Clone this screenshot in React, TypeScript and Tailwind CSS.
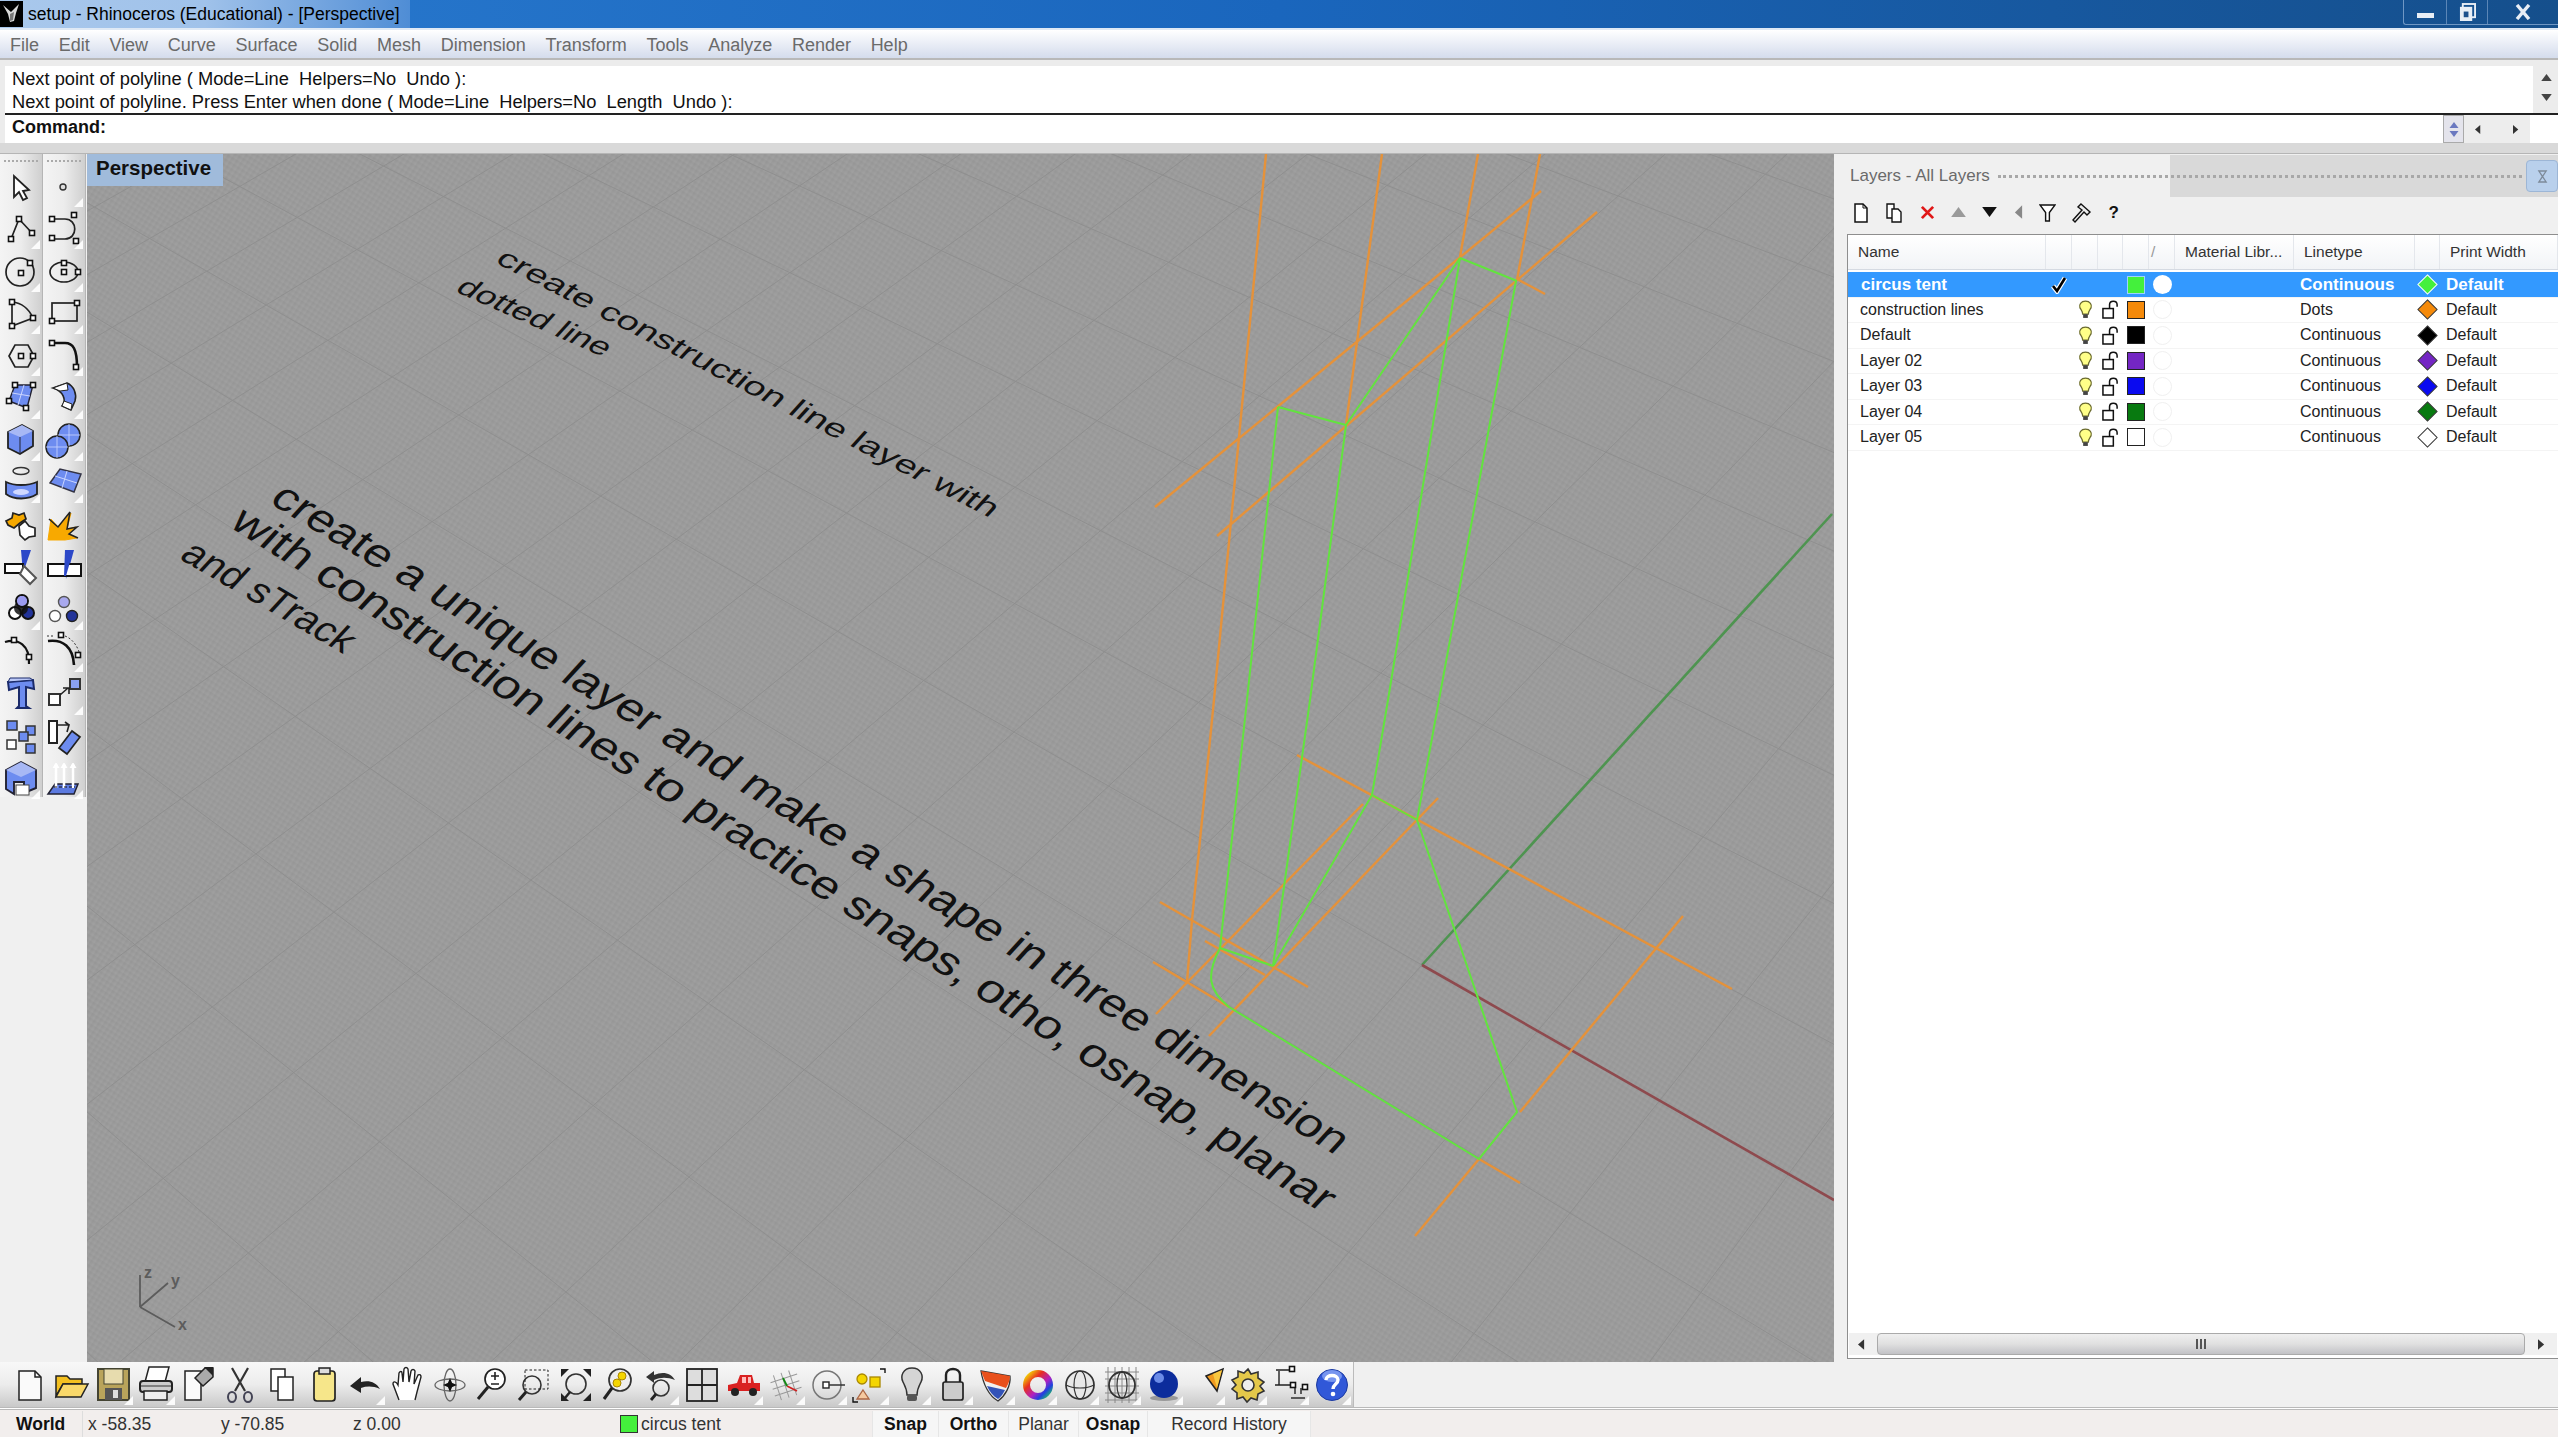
import React from "react";

const SANS = "font-['Liberation_Sans',sans-serif]";

// small svg helpers for the toolbar icons
const Ic = ({ children, fly = true }: { children: React.ReactNode; fly?: boolean }) => (
  <svg viewBox="0 0 42 42" className="w-[42px] h-[42px] block">
    {children}
    {fly && <polygon points="31,41 40,32 40,41" fill="#fff" opacity="0.9" />}
  </svg>
);
const H = ({ x, y, f = "#fff" }: { x: number; y: number; f?: string }) => (
  <rect x={x - 2.5} y={y - 2.5} width={5} height={5} fill={f} stroke="#111" strokeWidth={1.6} />
);
const L = { fill: "none", stroke: "#222", strokeWidth: 1.7 };
const BL = "#6d8cf0";

const leftIcons: React.ReactNode[] = [
  <Ic fly={false}><polygon points="14,10 14,31 19,26 23,34 27,32 23,25 29,24" fill="#fff" stroke="#222" strokeWidth="1.8" /></Ic>,
  <Ic><circle cx="20" cy="21" r="3" fill="#ddd" stroke="#333" strokeWidth="1.4" /></Ic>,
  <Ic><polyline points="11,31 19,11 32,25" {...L} /><H x={11} y={31} /><H x={19} y={11} /><H x={32} y={25} /></Ic>,
  <Ic><path d="M9 11 H22 C35 11 35 31 22 31 H9" {...L} /><H x={9} y={11} /><H x={31} y={7} /><H x={9} y={30} /><H x={33} y={33} /></Ic>,
  <Ic><circle cx="20" cy="21" r="14" {...L} /><H x={21} y={22} /><H x={30} y={12} /></Ic>,
  <Ic><ellipse cx="21" cy="21" rx="14" ry="10" {...L} /><H x={21} y={12} /><H x={21} y={21} /><H x={35} y={21} /></Ic>,
  <Ic fly><path d="M12 9 C22 10 29 16 33 25 L12 33 Z" {...L} /><H x={12} y={9} /><H x={33} y={25} /><H x={12} y={33} /></Ic>,
  <Ic><rect x="9" y="10" width="25" height="18" {...L} /><H x={9} y={28} /><H x={34} y={10} /></Ic>,
  <Ic><polygon points="15,10 28,10 34,21 28,32 15,32 9,21" {...L} /><H x={21} y={21} /><H x={33} y={21} /></Ic>,
  <Ic><path d="M9 8 H22 C30 8 34 14 34 32" fill="none" stroke="#111" strokeWidth="2.6" /><H x={9} y={8} /><H x={33} y={32} /></Ic>,
  <Ic><polygon points="15,7 33,7 27,30 9,23" fill={BL} stroke="#223" strokeWidth="1.4" /><line x1="12" y1="15" x2="30" y2="18" stroke="#cbd6ff" /><line x1="24" y1="7" x2="18" y2="27" stroke="#cbd6ff" /><H x={15} y={7} /><H x={33} y={7} /><H x={9} y={23} /><H x={26} y={30} /></Ic>,
  <Ic><path d="M10 10 L24 5 C31 8 34 16 32 23 L28 32 L19 28 C24 22 20 13 10 10Z" fill={BL} stroke="#222" strokeWidth="1.6" /><path d="M10 10 L24 5 L25 12 L17 13Z" fill="#fff" stroke="#222" /><path d="M19 28 L21 23 L29 26 L28 32Z" fill="#fff" stroke="#222" /></Ic>,
  <Ic><polygon points="8,12 22,5 33,11 33,26 20,34 8,28" fill={BL} stroke="#222" strokeWidth="1.8" /><polygon points="8,12 22,5 33,11 20,17" fill="#a7b8f5" /><line x1="20" y1="17" x2="20" y2="34" stroke="#223" /></Ic>,
  <Ic><circle cx="26" cy="15" r="11" fill={BL} stroke="#222" strokeWidth="1.5" /><circle cx="14" cy="27" r="11" fill={BL} stroke="#222" strokeWidth="1.5" /><path d="M26 4 V26 M15 15 H37 M14 16 V38 M3 27 H25" stroke="#cbd6ff" strokeWidth="0.8" /></Ic>,
];

const leftIcons2: React.ReactNode[] = [
  <Ic><ellipse cx="21" cy="9" rx="8" ry="3.5" fill="none" stroke="#333" strokeWidth="1.5" /><path d="M6 20 C14 24 28 24 37 20 V32 C28 38 14 38 6 32Z" fill={BL} stroke="#222" strokeWidth="1.8" /><ellipse cx="21" cy="30" rx="8" ry="3" fill="#cfd8ff" /></Ic>,
  <Ic><polygon points="7,21 17,7 38,12 31,30" fill={BL} stroke="#334" strokeWidth="1.5" /><line x1="12" y1="14" x2="34" y2="21" stroke="#cbd6ff" /><line x1="24" y1="9" x2="19" y2="26" stroke="#cbd6ff" /></Ic>,
  <Ic fly={false}><path d="M6 16 L12 13 L13 8 L19 10 L24 8 L26 14 L20 18 L14 23 L8 20Z" fill="#f5a800" stroke="#222" strokeWidth="1.7" /><path d="M19 21 L25 16 L29 21 L35 23 L35 31 L29 32 L25 35 L20 30Z" fill="#fff" stroke="#222" strokeWidth="1.7" /></Ic>,
  <Ic fly={false}><polygon points="5,35 8,14 15,22 28,8 24,24 33,22 26,29 34,33 22,35" fill="#f8a900" stroke="#f8a900" /><polyline points="6,14 15,22 27,7 24,24 34,22 26,29 35,33" fill="none" stroke="#222" strokeWidth="1.5" /></Ic>,
  <Ic fly={false}><polygon points="21,3 31,3 23,26" fill="#2c48c8" /><rect x="5" y="17" width="18" height="9" fill="#fff" stroke="#111" strokeWidth="2" /><polygon points="24,19 36,31 30,37 20,27" fill="#fff" stroke="#555" strokeWidth="2" /></Ic>,
  <Ic fly={false}><polygon points="22,3 31,3 23,32" fill="#2c48c8" /><rect x="5" y="17" width="33" height="12" fill="#fff" stroke="#111" strokeWidth="2" /><polygon points="22,3 29,8 23,29 21,29" fill="#2c48c8" /></Ic>,
  <Ic><circle cx="22" cy="12" r="6" fill="#9b9bf0" stroke="#111" strokeWidth="2" /><circle cx="15" cy="24" r="6" fill="#fff" stroke="#111" strokeWidth="2" /><circle cx="28" cy="24" r="6" fill="#223399" stroke="#111" strokeWidth="2" /><circle cx="21" cy="19" r="7" fill="#111" opacity="0.85" /><circle cx="22" cy="12" r="5" fill="#9b9bf0" /></Ic>,
  <Ic><circle cx="21" cy="13" r="5.5" fill="#a9a9ee" stroke="#555" strokeWidth="1.4" /><circle cx="12" cy="27" r="5.5" fill="#fff" stroke="#555" strokeWidth="1.4" /><circle cx="29" cy="27" r="5.5" fill="#223399" stroke="#222" strokeWidth="1.4" /></Ic>,
  <Ic fly={false}><path d="M5 11 C18 7 30 14 29 33" fill="none" stroke="#111" strokeWidth="2.2" /><H x={14} y={9} /><H x={29} y={26} /></Ic>,
  <Ic><path d="M5 10 C20 8 30 16 31 34" fill="none" stroke="#111" strokeWidth="2.6" /><path d="M4 5 H12 M22 5 C30 8 35 16 37 24" fill="none" stroke="#333" strokeDasharray="2 2" /><H x={18} y={4} /><H x={35} y={24} /></Ic>,
  <Ic fly={false}><path d="M8 8 L33 6 L34 15 L26 13 V32 L29 34 H17 L19 32 V13 L9 16Z" fill={BL} stroke="#1a2a6a" strokeWidth="2" /><path d="M8 8 L33 6 L30 4 L10 4Z" fill="#bcc9f7" stroke="#1a2a6a" /></Ic>,
  <Ic><rect x="6" y="20" width="11" height="11" fill="#fff" stroke="#333" strokeWidth="2" /><rect x="27" y="5" width="10" height="10" fill="#8aa0f0" stroke="#333" strokeWidth="2" /><path d="M17 21 L25 14 M20 14 H26 V20" fill="none" stroke="#222" strokeWidth="1.6" /></Ic>,
  <Ic fly={false}><rect x="7" y="5" width="10" height="9" fill={BL} stroke="#333" strokeWidth="1.5" /><rect x="26" y="10" width="9" height="9" fill={BL} stroke="#333" strokeWidth="1.5" /><rect x="19" y="16" width="9" height="9" fill={BL} stroke="#333" strokeWidth="1.5" /><rect x="7" y="24" width="9" height="9" fill="#fff" stroke="#333" strokeWidth="1.5" /><rect x="26" y="28" width="9" height="9" fill={BL} stroke="#333" strokeWidth="1.5" /></Ic>,
  <Ic fly={false}><rect x="6" y="5" width="8" height="22" fill="#fff" stroke="#222" strokeWidth="2" /><path d="M14 9 H26 L24 16 M26 9 L22 6" fill="none" stroke="#222" strokeWidth="1.6" /><polygon points="29,15 37,21 24,38 16,32" fill={BL} stroke="#222" strokeWidth="1.7" /></Ic>,
  <Ic><polygon points="6,12 21,4 36,12 36,30 24,35 24,24 14,24 14,36 6,31" fill={BL} stroke="#223" strokeWidth="1.9" /><polygon points="6,12 21,4 36,12 21,19" fill="#a7b8f5" /><rect x="16" y="27" width="13" height="10" fill="#fff" stroke="#444" /></Ic>,
  <Ic><polygon points="12,26 35,26 31,36 5,36" fill="#5c7ae0" stroke="#223" strokeWidth="1.5" /><path d="M13 30 V6 M21 30 V6 M30 30 V6" stroke="#fff" strokeWidth="2.5" /><path d="M10 10 L13 5 L16 10 M18 10 L21 5 L24 10 M27 10 L30 5 L33 10" fill="#fff" stroke="#fff" /><path d="M11 29 H32" stroke="#111" strokeDasharray="3 2" /></Ic>,
];

const P = { stroke: "#222", strokeWidth: 1.5 };
const bottomIcons: React.ReactNode[] = [
  <Ic fly={false}><path d="M10 7 H26 L32 13 V36 H10Z" fill="#fafafa" {...P} /><path d="M26 7 V13 H32" fill="none" {...P} /></Ic>,
  <Ic fly={false}><path d="M5 12 H16 L19 15 H31 V20 H12 L5 32Z" fill="#f4c020" {...P} /><path d="M12 20 H37 L30 33 H5Z" fill="#f9d86a" {...P} /></Ic>,
  <Ic><rect x="5" y="5" width="31" height="31" fill="#b9a45b" stroke="#443" strokeWidth="2" /><rect x="11" y="5" width="19" height="15" fill="#e7dcae" stroke="#443" /><rect x="12" y="24" width="17" height="12" fill="#555" /><rect x="20" y="26" width="5" height="8" fill="#ddd" /></Ic>,
  <Ic><polygon points="14,3 34,3 30,18 10,18" fill="#fff" {...P} /><rect x="5" y="17" width="32" height="11" rx="3" fill="#ccc" stroke="#222" strokeWidth="2" /><rect x="9" y="27" width="23" height="9" fill="#eee" {...P} /><path d="M6 22 H36" stroke="#333" /></Ic>,
  <Ic fly={false}><path d="M8 7 H24 V36 H8Z" fill="#fafafa" {...P} /><polygon points="18,14 28,4 36,4 36,13 26,22" fill="#aaa" {...P} /><polygon points="36,3 36,12 27,3" fill="#222" /></Ic>,
  <Ic fly={false}><path d="M13 4 L26 27 M29 4 L16 27" stroke="#333" strokeWidth="2.2" /><ellipse cx="13" cy="33" rx="4" ry="5" fill="none" stroke="#445" strokeWidth="2" /><ellipse cx="29" cy="33" rx="4" ry="5" fill="none" stroke="#445" strokeWidth="2" /></Ic>,
  <Ic fly={false}><rect x="10" y="5" width="14" height="22" fill="#fff" {...P} /><rect x="17" y="13" width="15" height="23" fill="#fff" {...P} /></Ic>,
  <Ic fly={false}><rect x="11" y="7" width="21" height="30" rx="3" fill="#f6e68a" stroke="#222" strokeWidth="1.7" /><rect x="16" y="4" width="11" height="6" fill="#ddd" {...P} /></Ic>,
  <Ic><path d="M5 22 L16 13 V18 C24 16 31 18 35 25 C28 22 22 22 16 24 V29Z" fill="#222" /></Ic>,
  <Ic fly={false}><path d="M12 36 L6 20 C6 17 9 17 11 21 L12 9 C13 7 15 7 15 9 L16 18 L17 5 C18 3 20 3 21 5 L22 18 L24 7 C25 5 27 5 28 7 L27 20 L31 11 C33 10 34 11 34 13 L30 28 L28 36" fill="#fff" stroke="#222" strokeWidth="1.4" /></Ic>,
  <Ic fly={false}><ellipse cx="21" cy="21" rx="15" ry="6" fill="none" stroke="#666" strokeWidth="1.3" /><ellipse cx="21" cy="21" rx="6" ry="16" fill="none" stroke="#666" strokeWidth="1.3" /><path d="M21 14 L24 21 L21 28 L18 21Z M14 21 L21 18 L28 21 L21 24Z" fill="#111" /></Ic>,
  <Ic fly={false}><circle cx="24" cy="15" r="10" fill="#fff" stroke="#222" strokeWidth="1.7" /><path d="M17 23 L7 35" stroke="#222" strokeWidth="3" /><path d="M20 12 H28 M24 8 V16 M20 20 H28" stroke="#222" strokeWidth="1.6" /></Ic>,
  <Ic fly={false}><circle cx="19" cy="21" r="9" fill="none" stroke="#333" strokeWidth="1.6" /><path d="M13 28 L6 36" stroke="#222" strokeWidth="3" /><rect x="12" y="6" width="23" height="19" fill="none" stroke="#222" strokeDasharray="2.5 2" /></Ic>,
  <Ic fly={false}><circle cx="21" cy="20" r="10" fill="none" stroke="#333" strokeWidth="1.6" /><path d="M15 28 L10 34" stroke="#222" strokeWidth="2.5" /><polygon points="6,5 14,5 6,13" fill="#222" /><polygon points="36,5 28,5 36,13" fill="#222" /><polygon points="6,37 14,37 6,29" fill="#222" /><polygon points="36,37 28,37 36,29" fill="#222" /></Ic>,
  <Ic fly={false}><circle cx="23" cy="16" r="11" fill="#eee" stroke="#333" strokeWidth="1.7" /><circle cx="25" cy="12" r="4" fill="#f4d500" stroke="#a80" /><circle cx="20" cy="19" r="4" fill="#f4d500" stroke="#a80" /><path d="M15 24 L7 35" stroke="#222" strokeWidth="3" /></Ic>,
  <Ic><circle cx="22" cy="24" r="8" fill="none" stroke="#333" strokeWidth="1.6" /><path d="M17 30 L12 36" stroke="#222" strokeWidth="2.8" /><path d="M7 13 L15 7 L15 11 C24 7 32 9 36 16 C28 13 22 13 15 16 V19Z" fill="#333" /></Ic>,
  <Ic fly={false}><rect x="6" y="5" width="30" height="32" fill="#ddd" stroke="#222" strokeWidth="1.8" /><path d="M21 5 V37 M6 21 H36" stroke="#222" strokeWidth="1.8" /></Ic>,
  <Ic><path d="M5 26 V21 L14 19 L17 11 H29 L31 19 H37 V27 H5Z" fill="#d92020" /><rect x="19" y="13" width="4" height="6" fill="#fbb" /><rect x="25" y="13" width="3" height="6" fill="#fbb" /><circle cx="12" cy="28" r="4" fill="#222" /><circle cx="30" cy="28" r="4" fill="#222" /></Ic>,
  <Ic><g transform="rotate(-18 21 21)" stroke="#999" strokeWidth="1" fill="none"><path d="M7 14 H35 M7 21 H35 M7 28 H35 M12 8 V34 M20 8 V34 M28 8 V34" /></g><path d="M22 22 L32 27" stroke="#c22" strokeWidth="1.8" fill="none" /><path d="M18 14 L22 22" stroke="#181" strokeWidth="1.8" /></Ic>,
  <Ic><circle cx="20" cy="21" r="14" fill="none" stroke="#777" strokeWidth="1.5" /><rect x="16" y="18" width="6" height="6" fill="#fff" stroke="#222" strokeWidth="1.4" /><path d="M22 21 H38" stroke="#333" strokeWidth="1.5" /></Ic>,
  <Ic><circle cx="13" cy="15" r="5" fill="#f4d500" stroke="#a80" strokeWidth="1.3" /><rect x="21" y="13" width="10" height="10" fill="#f4d500" stroke="#a80" strokeWidth="1.3" /><polygon points="14,26 20,35 8,35" fill="#f5c9a0" stroke="#a64" strokeWidth="1.3" /><path d="M31 5 H36 V9 M4 33 V38 H9" fill="none" stroke="#111" strokeWidth="1.4" /></Ic>,
  <Ic><path d="M21 4 C30 4 33 12 30 18 C28 22 26 25 26 31 H16 C16 25 14 22 12 18 C9 12 12 4 21 4Z" fill="#d5d5d5" stroke="#333" strokeWidth="1.5" /><rect x="16" y="31" width="10" height="6" rx="2" fill="#555" /></Ic>,
  <Ic><path d="M13 19 V11 C13 3 27 3 27 11 V19" fill="none" stroke="#222" strokeWidth="2.4" /><rect x="10" y="18" width="20" height="18" rx="2" fill="#ccc" stroke="#222" strokeWidth="1.7" /></Ic>,
  <Ic><path d="M6 7 L35 12 C36 22 30 32 23 37 C14 32 8 20 6 7Z" fill="#f0f0f0" stroke="#333" strokeWidth="1.3" /><path d="M6 7 L35 12 C35 17 33 20 31 24 L10 17Z" fill="#e8501c" /><path d="M12 22 L30 26 C28 30 26 33 23 35 C18 32 14 27 12 22Z" fill="#3353b8" /></Ic>,
  <Ic><circle cx="21" cy="21" r="11.5" fill="none" stroke="url(#rainbow)" strokeWidth="7" /><defs><linearGradient id="rainbow" x1="0" y1="0" x2="1" y2="1"><stop offset="0" stopColor="#f4e400" /><stop offset="0.3" stopColor="#e83020" /><stop offset="0.6" stopColor="#b020c0" /><stop offset="0.8" stopColor="#2040e0" /><stop offset="1" stopColor="#20c060" /></linearGradient></defs></Ic>,
  <Ic><circle cx="21" cy="21" r="14" fill="#e8e8e8" stroke="#333" strokeWidth="1.7" /><ellipse cx="21" cy="21" rx="6" ry="14" fill="none" stroke="#333" strokeWidth="1.2" /><path d="M7 21 C14 25 28 25 35 21" fill="none" stroke="#333" strokeWidth="1.2" /></Ic>,
  <Ic><path d="M4 8 H38 M4 15 H38 M4 22 H38 M4 29 H38 M4 36 H38 M7 3 V39 M14 3 V39 M21 3 V39 M28 3 V39 M35 3 V39" stroke="#888" strokeWidth="1" /><circle cx="21" cy="21" r="13" fill="none" stroke="#333" strokeWidth="1.8" /><ellipse cx="21" cy="21" rx="5" ry="13" fill="none" stroke="#333" strokeWidth="1.2" /></Ic>,
  <Ic><ellipse cx="21" cy="34" rx="14" ry="3" fill="#999" /><circle cx="21" cy="20" r="14" fill="#0c2c9c" /><circle cx="16" cy="14" r="5" fill="#7c9cf4" opacity="0.85" /></Ic>,
  <Ic><polygon points="21,12 38,5 32,27" fill="#f09a20" stroke="#222" strokeWidth="1.5" /><polygon points="28,10 37,6 32,24" fill="#f9c840" /></Ic>,
  <Ic><path d="M21 5 L24 10 L31 8 L31 14 L37 18 L33 22 L37 27 L31 30 L30 36 L24 34 L20 38 L16 33 L10 35 L10 29 L5 25 L9 21 L5 16 L11 13 L11 7 L17 9Z" fill="#e4c84a" stroke="#333" strokeWidth="1.6" /><circle cx="21" cy="21" r="6" fill="#eee" stroke="#333" strokeWidth="1.6" /></Ic>,
  <Ic><path d="M7 6 H20 M10 7 V21 M6 21 H26 M26 24 V30 M32 24 V30" stroke="#222" strokeWidth="1.4" fill="none" /><H x={23} y={5} /><H x={24} y={21} /><H x={36} y={23} /><path d="M22 34 H36" stroke="#222" strokeWidth="1.4" /></Ic>,
  <Ic><circle cx="21" cy="21" r="15.5" fill="#3158d8" stroke="#1c3aa0" /><ellipse cx="21" cy="12" rx="10" ry="6" fill="#8aa5f5" opacity="0.8" /><path d="M15 16 C15 10 27 10 27 16 C27 20 22 20 22 25" fill="none" stroke="#fff" strokeWidth="3.4" /><circle cx="22" cy="30" r="2.3" fill="#fff" /></Ic>,
];

const layers = [
  { name: "circus tent", color: "#44f03c", line: "Continuous", active: true },
  { name: "construction lines", color: "#f58a0a", line: "Dots" },
  { name: "Default", color: "#000000", line: "Continuous" },
  { name: "Layer 02", color: "#7426c4", line: "Continuous" },
  { name: "Layer 03", color: "#0a0af0", line: "Continuous" },
  { name: "Layer 04", color: "#087a10", line: "Continuous" },
  { name: "Layer 05", color: "#ffffff", line: "Continuous" },
];

const menus = ["File", "Edit", "View", "Curve", "Surface", "Solid", "Mesh", "Dimension", "Transform", "Tools", "Analyze", "Render", "Help"];

const COLS = "grid grid-cols-[198px_26px_26px_25px_26px_26px_119px_121px_25px_1fr]";

const Bulb = () => (
  <svg viewBox="0 0 16 20" className="w-[15px] h-[19px]">
    <path d="M8 1 C13 1 15 5 14 8 C13 10 11 12 11 15 H5 C5 12 3 10 2 8 C1 5 3 1 8 1Z" fill="#ffff88" stroke="#6b6b30" strokeWidth="1.3" />
    <rect x="5.5" y="15" width="5" height="4" fill="#444" />
  </svg>
);

const Lock = () => (
  <svg viewBox="0 0 18 20" className="w-[17px] h-[19px]">
    <rect x="1" y="9" width="11" height="10" fill="#fff" stroke="#111" strokeWidth="1.6" />
    <path d="M8 9 V5 C8 0 16 0 16 5 V7" fill="none" stroke="#111" strokeWidth="1.6" />
  </svg>
);

const Diamond = ({ c, active }: { c: string; active?: boolean }) => (
  <svg viewBox="0 0 22 22" className="w-[21px] h-[21px]">
    <polygon points="11,1 21,11 11,21 1,11" fill={c} stroke={c === "#ffffff" ? "#333" : active ? "#fff" : "#333"} strokeWidth="1.1" />
  </svg>
);

const Row = ({ l }: { l: (typeof layers)[number] }) => (
  <div className={`${COLS} h-[25.5px] items-center border-b border-[#f4f4f4] ${l.active ? "bg-[#3399ff] text-white font-bold text-[17px]" : "text-[#222] text-[16px]"}`}>
    <div className={l.active ? "pl-[13px]" : "pl-[12px]"}>{l.name}</div>
    <div className="flex justify-center">
      {l.active && (
        <svg viewBox="0 0 18 18" className="w-[18px] h-[18px]"><path d="M3 10 L7 15 L15 2" fill="none" stroke="#fff" strokeWidth="5" /><path d="M3 10 L7 15 L15 2" fill="none" stroke="#000" strokeWidth="2.6" /></svg>
      )}
    </div>
    <div className="flex justify-center">{!l.active && <Bulb />}</div>
    <div className="flex justify-center">{!l.active && <Lock />}</div>
    <div className="flex justify-center">
      <div className={`w-[18px] h-[18px] border ${l.active ? "border-[#9fd0ff]" : "border-[#222]"}`} style={{ backgroundColor: l.color }} />
    </div>
    <div className="flex justify-center">
      <div className={`w-[19px] h-[19px] rounded-full ${l.active ? "bg-white" : "border border-[#f0f0f0]"}`} />
    </div>
    <div />
    <div className="pl-[6px]">{l.line}</div>
    <div className="flex justify-center"><Diamond c={l.color} active={l.active} /></div>
    <div className="pl-[6px]">Default</div>
  </div>
);

// perspective grid of the construction plane, in screen pixels of the page
const O = [1422, 965];
const VX = [-2909, -1508];
const VY = [4223, -2116];
const project = (u: number, v: number) => {
  const a = u * 0.026;
  const b = v * 0.032;
  const d = 1 + a + b;
  return [(O[0] + a * VX[0] + b * VY[0]) / d, (O[1] + a * VX[1] + b * VY[1]) / d];
};
const gridLines: string[] = [];
for (let u = -24; u <= 70; u++) {
  const p = project(u, -8);
  const q = project(u, 90);
  gridLines.push(`M${p[0].toFixed(1)} ${p[1].toFixed(1)}L${q[0].toFixed(1)} ${q[1].toFixed(1)}`);
}
for (let v = -20; v <= 70; v++) {
  const p = project(-8, v);
  const q = project(90, v);
  gridLines.push(`M${p[0].toFixed(1)} ${p[1].toFixed(1)}L${q[0].toFixed(1)} ${q[1].toFixed(1)}`);
}

const orange = [
  "M1266 154L1213 710L1192 920L1187 982",
  "M1382 154L1346 425",
  "M1478 154L1460 257",
  "M1540 154L1517 280",
  "M1541 191L1155 507",
  "M1597 212L1217 536",
  "M1517 279L1545 294",
  "M1297 755L1732 989",
  "M1363 804L1156 1014",
  "M1438 798L1209 1036",
  "M1160 902L1308 987",
  "M1153 962L1229 1007",
  "M1205 941L1265 975",
  "M1683 916L1520 1112",
  "M1479 1159L1415 1236",
  "M1479 1159L1520 1183",
];
const green = [
  "M1460 258L1517 281",
  "M1278 407L1346 425",
  "M1278 407L1247 700L1220 948",
  "M1346 425L1310 700L1273 966",
  "M1460 258L1346 425",
  "M1460 258L1388 700L1372 795L1273 966",
  "M1516 281L1439 700L1417 820",
  "M1372 795L1417 820",
  "M1220 948L1273 966",
  "M1220 948C1206 975 1208 990 1229 1007L1479 1159L1517 1112L1417 820",
];

const notes = [
  { t: "create construction line layer with", x: 494, y: 262, dx: 496, dy: 256, fs: 33, k: 0.86 },
  { t: "dotted line", x: 454, y: 291, dx: 149, dy: 66, fs: 33, k: 0.86 },
  { t: "create a unique layer and make a shape in three dimension", x: 268, y: 502, dx: 1067, dy: 653, fs: 46, k: 0.92 },
  { t: "with construction lines to practice snaps, otho, osnap, planar", x: 228, y: 526, dx: 1094, dy: 687, fs: 46, k: 0.92 },
  { t: "and sTrack", x: 178, y: 558, dx: 165, dy: 96, fs: 42, k: 0.92 },
];

const Viewport = () => (
  <div className="relative flex-1 min-w-0 bg-[#9b9b9b] overflow-hidden">
    <svg viewBox="87 154 1747 1208" className="block w-full h-full">
      <defs>
        <pattern id="fine" width="5" height="5" patternUnits="userSpaceOnUse" patternTransform="rotate(32)">
          <rect width="5" height="5" fill="#9b9b9b" />
          <rect width="2.5" height="2.5" fill="#979797" />
          <rect x="2.5" y="2.5" width="2.5" height="2.5" fill="#9f9f9f" />
        </pattern>
      </defs>
      <rect x="87" y="154" width="1747" height="1208" fill="url(#fine)" />
      <path d={gridLines.join("")} fill="none" stroke="#8f8f8f" strokeWidth="1" />
      {/* world axes */}
      <path d="M1832 514L1422 965" fill="none" stroke="#4e9450" strokeWidth="2.6" />
      <path d="M1422 965L1834 1200" fill="none" stroke="#8e4a4e" strokeWidth="2.6" />
      {orange.map((d) => (
        <path key={d} d={d} fill="none" stroke="#e5923a" strokeWidth="2.4" />
      ))}
      {green.map((d) => (
        <path key={d} d={d} fill="none" stroke="#62e43e" strokeWidth="2" />
      ))}
      {notes.map((n) => {
        const len = Math.hypot(n.dx, n.dy);
        return (
          <text
            key={n.t}
            transform={`matrix(${n.dx / len} ${n.dy / len} ${-0.676 * n.k} ${0.737 * n.k} ${n.x} ${n.y})`}
            fontFamily="'Liberation Sans', sans-serif"
            fontSize={n.fs}
            fill="#111"
            textLength={len}
            lengthAdjust="spacingAndGlyphs"
          >
            {n.t}
          </text>
        );
      })}
      {/* cplane widget */}
      <path d="M140 1307V1275M140 1307L168 1283M140 1307L175 1327" fill="none" stroke="#5c5c5c" strokeWidth="1.8" />
      <g fontFamily="'Liberation Sans', sans-serif" fontSize="16" fontWeight="bold" fill="#5c5c5c">
        <text x="144" y="1278">z</text>
        <text x="171" y="1286">y</text>
        <text x="178" y="1330">x</text>
      </g>
    </svg>
    <div className="absolute left-0 top-0 w-[136px] h-[32px] bg-[#a0bbdb] pl-[9px] text-[20.5px] leading-[27px] font-bold text-[#111]">Perspective</div>
  </div>
);

const LeftToolbars = () => {
  const all = [...leftIcons, ...leftIcons2];
  return (
    <div className="w-[87px] shrink-0 bg-[#f0f0f0]">
      <div className="flex h-[643px]">
        {[0, 1].map((c) => (
          <div key={c} className="w-[43px] h-full border-r border-[#b5b5b5] bg-linear-to-r from-[#f4f4f4] via-[#ececec] to-[#cfcfcf] pt-[6px]">
            <div className="mx-[4px] h-[2px] border-t-2 border-dotted border-[#aaa] mb-[4px]" />
            {Array.from({ length: 15 }).map((_, i) => (
              <div key={i} className="h-[42.3px] flex justify-center items-center">
                {all[i * 2 + c]}
              </div>
            ))}
          </div>
        ))}
      </div>
    </div>
  );
};

const toolIcons = [
  <svg key="a" viewBox="0 0 16 20" className="w-[16px] h-[20px]"><path d="M2 1 H10 L14 5 V19 H2Z" fill="#fff" stroke="#111" strokeWidth="1.5" /><path d="M10 1 V5 H14" fill="none" stroke="#111" /></svg>,
  <svg key="b" viewBox="0 0 18 20" className="w-[18px] h-[20px]"><path d="M2 1 H9 V15 H2Z" fill="#fff" stroke="#111" strokeWidth="1.4" /><path d="M7 6 H13 L16 9 V19 H7Z" fill="#fff" stroke="#111" strokeWidth="1.4" /></svg>,
  <svg key="c" viewBox="0 0 16 16" className="w-[15px] h-[15px]"><path d="M2 2 L14 14 M14 2 L2 14" stroke="#e01818" strokeWidth="3" /></svg>,
  <svg key="d" viewBox="0 0 16 12" className="w-[15px] h-[11px]"><polygon points="8,0 16,11 0,11" fill="#9a9a9a" /></svg>,
  <svg key="e" viewBox="0 0 16 12" className="w-[15px] h-[11px]"><polygon points="8,11 16,0 0,0" fill="#111" /></svg>,
  <svg key="f" viewBox="0 0 10 16" className="w-[9px] h-[15px]"><polygon points="9,0 9,15 1,8" fill="#888" /></svg>,
  <svg key="g" viewBox="0 0 18 20" className="w-[17px] h-[19px]"><path d="M1 2 H17 L11 10 V19 H7 V10Z" fill="#fff" stroke="#111" strokeWidth="1.5" /></svg>,
  <svg key="h" viewBox="0 0 20 20" className="w-[20px] h-[20px]"><path d="M9 1 L18 9 L15 12 L12 9 L3 19 L1 17 L10 7 L6 4Z" fill="#eee" stroke="#111" strokeWidth="1.4" /></svg>,
];

const LayersPanel = () => (
  <div className={`w-[724px] shrink-0 bg-[#f0f0f0] flex flex-col relative -mb-[45px] z-10 ${SANS}`}>
    <div className="h-[42px] shrink-0 flex items-center relative mt-[1px]">
      <div className="absolute inset-y-0 left-[336px] right-0 bg-[#d9d9d9]" />
      <span className="relative pl-[16px] text-[17px] text-[#6a6a6a]">Layers - All Layers</span>
      <div className="relative flex-1 ml-[8px] mr-[36px] h-[3px] border-t-[3px] border-dotted border-[#a8a8a8]" />
      <div className="absolute right-0 top-[5px] w-[32px] h-[32px] bg-[#b9d0ec] border border-[#9db6d6] rounded-sm flex items-center justify-center">
        <svg viewBox="0 0 12 14" className="w-[11px] h-[13px]"><path d="M2 1 H10 L2 13 H10 L2 1Z" fill="none" stroke="#7d8a99" strokeWidth="1.4" /></svg>
      </div>
    </div>
    <div className="h-[37px] shrink-0 flex items-center pl-[19px] pb-[6px]">
      <div className="flex items-center justify-between w-[266px]">
        {toolIcons.map((i) => i)}
        <span className="font-bold text-[17px] text-[#111]">?</span>
      </div>
    </div>
    <div className="ml-[13px] h-[1125px] border border-[#8e8e8e] border-r-0 bg-white flex flex-col shrink-0">
      <div className={`${COLS} h-[35px] shrink-0 items-center text-[15.5px] text-[#333] bg-linear-to-b from-white to-[#f2f4f7] border-b border-[#d5dae2] mb-[2px]`}>
        {["Name", "", "", "", "", "/", "Material Libr...", "Linetype", "", "Print Width"].map((h, i) => (
          <div key={i} className={`h-full flex items-center border-r border-[#e4e7ec] whitespace-nowrap pb-[1px] ${i === 5 ? "pl-[2px] text-[#999]" : "pl-[10px]"}`}>
            {h}
          </div>
        ))}
      </div>
      {layers.map((l) => (
        <Row key={l.name} l={l} />
      ))}
      <div className="flex-1" />
      <div className="h-[22px] mb-[3px] mx-[1px] flex items-center bg-[#f0f0f0] shrink-0">
        <svg viewBox="0 0 8 12" className="ml-[9px] w-[7px] h-[11px]"><polygon points="7,0 7,12 0,6" fill="#333" /></svg>
        <div className="ml-[12px] w-[648px] h-[22px] rounded-sm border border-[#aaa] bg-linear-to-b from-[#efefef] via-[#e0e0e0] to-[#c2c2c6] flex items-center justify-center">
          <div className="w-[11px] h-[10px] bg-[repeating-linear-gradient(90deg,#555_0_2px,transparent_2px_4px)]" />
        </div>
        <svg viewBox="0 0 8 12" className="ml-[13px] w-[7px] h-[11px]"><polygon points="0,0 0,12 7,6" fill="#333" /></svg>
      </div>
    </div>
  </div>
);

const App = () => (
  <div className={`w-[2558px] h-[1437px] overflow-hidden flex flex-col bg-[#f0f0f0] ${SANS}`}>
    {/* title bar */}
    <div className="h-[30px] shrink-0 relative flex items-center bg-linear-to-r from-[#2a7bd0] via-[#1a66bd] to-[#154f8c] border-b-2 border-[#dfe9f5]">
      <div className="absolute left-0 top-0 bottom-0 w-[410px] bg-linear-to-r from-[#a9c8ec] via-[#a0c2ea] to-[#4f8dd5]" />
      <div className="relative w-[23px] h-[26px] bg-black flex items-center justify-center mr-[5px]">
        <svg viewBox="0 0 20 24" className="w-[20px] h-[24px]"><path d="M1 3 L9 10 L17 2 L14 11 L12 19 L8 20 L6 12Z" fill="#d8d8d8" /><path d="M8 12 L12 10 L11 18 L8 19Z" fill="#777" /></svg>
      </div>
      <span className="relative text-[17.5px] pt-[1px] text-black">setup - Rhinoceros (Educational) - [Perspective]</span>
      <div className="absolute right-0 top-0 w-[155px] h-[25px] border border-t-0 border-r-0 border-[#6f97c4] rounded-bl-[3px] flex text-white">
        <div className="w-[43px] border-r border-[#5b86b7] flex items-center justify-center">
          <div className="w-[17px] h-[5px] mt-[6px] bg-[#e8eef6]" />
        </div>
        <div className="w-[41px] border-r border-[#5b86b7] flex items-center justify-center">
          <svg viewBox="0 0 18 20" className="w-[17px] h-[19px]"><rect x="4" y="1" width="13" height="14" fill="none" stroke="#e8eef6" strokeWidth="2" /><rect x="1" y="4" width="13" height="15" fill="#e8eef6" /><rect x="5" y="9" width="5" height="6" fill="#1c508c" /></svg>
        </div>
        <div className="flex-1 flex items-center justify-center">
          <svg viewBox="0 0 16 16" className="w-[16px] h-[16px]"><path d="M2 1 L14 15 M14 1 L2 15" stroke="#e8eef6" strokeWidth="3.4" /></svg>
        </div>
      </div>
    </div>

    {/* menu bar */}
    <div className="h-[30px] shrink-0 flex items-center gap-[19.7px] pl-[10px] pt-[3px] text-[18px] text-[#6a6a6a] bg-linear-to-b from-white via-[#e9edf6] to-[#d4dcec] border-b-2 border-[#b8b8b8]">
      {menus.map((m) => (
        <span key={m}>{m}</span>
      ))}
    </div>

    {/* command area */}
    <div className="shrink-0 pt-[6px] bg-[#ececec] relative">
      <div className="h-[47px] ml-[5px] mr-[25px] bg-white pl-[7px] pt-[1px] text-[18.3px] leading-[23px] text-[#111] whitespace-pre">
        <div>Next point of polyline ( Mode=Line  Helpers=No  Undo ):</div>
        <div>Next point of polyline. Press Enter when done ( Mode=Line  Helpers=No  Length  Undo ):</div>
      </div>
      <div className="absolute right-[6px] top-[14px] flex flex-col gap-[13px]">
        <svg viewBox="0 0 12 8" className="w-[11px] h-[7px]"><polygon points="6,0 12,8 0,8" fill="#444" /></svg>
        <svg viewBox="0 0 12 8" className="w-[11px] h-[7px]"><polygon points="6,8 12,0 0,0" fill="#444" /></svg>
      </div>
      <div className="h-[2px] ml-[5px] bg-[#222]" />
      <div className="h-[28px] ml-[5px] bg-white pl-[7px] flex items-center">
        <span className="text-[18px] pb-[3px] font-bold text-[#111]">Command:</span>
        <div className="ml-auto mr-[28px] flex items-center h-full bg-[#ededed]">
          <div className="w-[21px] h-full bg-[#e4e4ec] border border-[#aaa] flex flex-col items-center justify-center gap-[3px]">
            <svg viewBox="0 0 12 8" className="w-[10px] h-[6px]"><polygon points="6,0 12,8 0,8" fill="#6a78c0" /></svg>
            <svg viewBox="0 0 12 8" className="w-[10px] h-[6px]"><polygon points="6,8 12,0 0,0" fill="#6a78c0" /></svg>
          </div>
          <div className="w-[66px] flex justify-between px-[11px]">
            <svg viewBox="0 0 8 12" className="w-[6px] h-[11px]"><polygon points="7,0 7,12 0,6" fill="#333" /></svg>
            <svg viewBox="0 0 8 12" className="w-[6px] h-[11px]"><polygon points="0,0 0,12 7,6" fill="#333" /></svg>
          </div>
        </div>
      </div>
      <div className="h-[11px] bg-[#d9d9d9] border-b border-[#b5b5b5]" />
    </div>

    {/* main */}
    <div className="flex-1 min-h-0 flex">
      <LeftToolbars />
      <Viewport />
      <LayersPanel />
    </div>

    {/* bottom toolbar */}
    <div className="h-[45px] shrink-0 flex bg-[#f0f0f0]">
      <div className="w-[1354px] h-full flex items-center pl-[9px] bg-linear-to-b from-[#f8f8f8] via-[#ececec] to-[#c9c9c9] border-r border-[#bbb]">
        {bottomIcons.map((ic, i) => (
          <div key={i} className="w-[42px] shrink-0 flex justify-center">
            {ic}
          </div>
        ))}
      </div>
    </div>
    <div className="h-[3px] shrink-0 bg-white border-y border-[#b9b9b9]" />

    {/* status bar */}
    <div className="h-[27px] shrink-0 flex items-center pt-[1px] bg-[#f2eeed] text-[17.5px] text-[#333]">
      <div className="w-[83px] h-full flex items-center pl-[16px] font-bold text-[#111] border-r border-[#ddd]">World</div>
      <div className="w-[138px] pl-[5px]">x -58.35</div>
      <div className="w-[132px]">y -70.85</div>
      <div className="w-[267px]">z 0.00</div>
      <div className="w-[18px] h-[18px] bg-[#44f03c] border border-[#333] mr-[3px]" />
      <div className="w-[231px]">circus tent</div>
      <div className="w-[67px] h-full bg-[#f6f6f6] flex items-center justify-center font-bold text-[#111] border-x border-[#e6e6e6]">Snap</div>
      <div className="w-[70px] h-full bg-[#f6f6f6] flex items-center justify-center font-bold text-[#111] border-r border-[#e6e6e6]">Ortho</div>
      <div className="w-[70px] h-full bg-[#f6f6f6] flex items-center justify-center border-r border-[#e6e6e6]">Planar</div>
      <div className="w-[69px] h-full bg-[#f6f6f6] flex items-center justify-center font-bold text-[#111] border-r border-[#e6e6e6]">Osnap</div>
      <div className="w-[163px] h-full bg-[#f6f6f6] flex items-center justify-center border-r border-[#e6e6e6]">Record History</div>
    </div>
  </div>
);

export default App;
